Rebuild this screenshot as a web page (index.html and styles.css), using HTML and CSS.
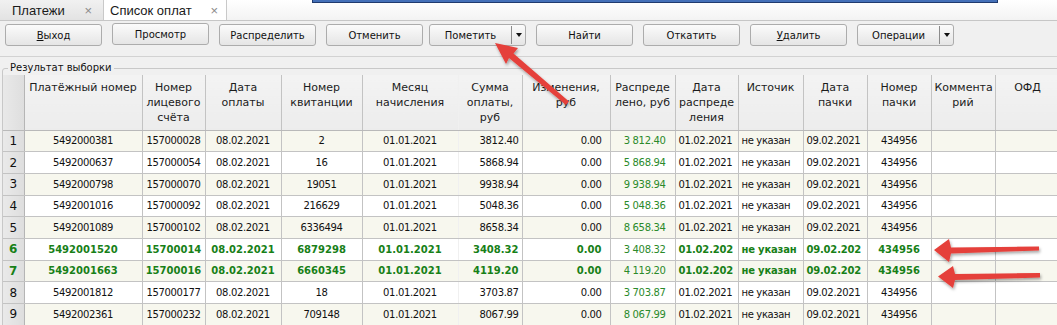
FILE: index.html
```html
<!DOCTYPE html>
<html lang="ru">
<head>
    <meta charset="UTF-8">
    <meta name="viewport" content="width=device-width, initial-scale=1.0">
    <title>Список оплат</title>
    <link rel="stylesheet" href="styles.css">
</head>
<body>
<div class="tabbar">
    <div class="tab tab-pay">Платежи<span class="close">×</span></div>
    <div class="tab tab-list">Список оплат<span class="close">×</span></div>
    <div class="winbar"></div>
</div>
<div class="toolbar">
    <button class="btn"><u>В</u>ыход</button>
    <button class="btn btn-up">Просмотр</button>
    <button class="btn">Распределить</button>
    <button class="btn">Отменить</button>
    <div class="split split-mark"><span class="label">Пометить</span><span class="drop"><i></i></span></div>
    <button class="btn">Найти</button>
    <button class="btn">Откатить</button>
    <button class="btn"><u>У</u>далить</button>
    <div class="split"><span class="label">Операции</span><span class="drop"><i></i></span></div>
</div>
<fieldset class="group">
    <legend>Результат выборки</legend>
    <table class="grid">
        <colgroup>
            <col style="width:21px"><col style="width:118px"><col style="width:63px"><col style="width:76px">
            <col style="width:81px"><col style="width:96px"><col style="width:64px"><col style="width:88px">
            <col style="width:65px"><col style="width:63px"><col style="width:65px"><col style="width:64px">
            <col style="width:64px"><col style="width:64px"><col style="width:65px">
        </colgroup>
        <thead>
            <tr>
                <th class="num"></th>
                <th>Платёжный номер</th>
                <th>Номер<br>лицевого<br>счёта</th>
                <th>Дата<br>оплаты</th>
                <th>Номер<br>квитанции</th>
                <th class="nosep">Месяц<br>начисления</th>
                <th>Сумма<br>оплаты,<br>руб</th>
                <th>Изменения,<br>руб</th>
                <th>Распреде<br>лено, руб</th>
                <th>Дата<br>распреде<br>ления</th>
                <th>Источик</th>
                <th>Дата<br>пачки</th>
                <th>Номер<br>пачки</th>
                <th>Коммента<br>рий</th>
                <th>ОФД</th>
            </tr>
        </thead>
        <tbody>
            <tr>
                <td class="num">1</td><td class="c">5492000381</td><td class="c">157000028</td><td class="c">08.02.2021</td><td class="c">2</td>
                <td class="c nosep">01.01.2021</td><td class="r">3812.40</td><td class="r wide">0.00</td><td class="r dist">3 812.40</td>
                <td class="l">01.02.2021</td><td class="l">не указан</td><td class="l">09.02.2021</td><td class="c">434956</td><td></td><td></td>
            </tr>
            <tr>
                <td class="num">2</td><td class="c">5492000637</td><td class="c">157000054</td><td class="c">08.02.2021</td><td class="c">16</td>
                <td class="c nosep">01.01.2021</td><td class="r">5868.94</td><td class="r wide">0.00</td><td class="r dist">5 868.94</td>
                <td class="l">01.02.2021</td><td class="l">не указан</td><td class="l">09.02.2021</td><td class="c">434956</td><td></td><td></td>
            </tr>
            <tr>
                <td class="num">3</td><td class="c">5492000798</td><td class="c">157000070</td><td class="c">08.02.2021</td><td class="c">19051</td>
                <td class="c nosep">01.01.2021</td><td class="r">9938.94</td><td class="r wide">0.00</td><td class="r dist">9 938.94</td>
                <td class="l">01.02.2021</td><td class="l">не указан</td><td class="l">09.02.2021</td><td class="c">434956</td><td></td><td></td>
            </tr>
            <tr>
                <td class="num">4</td><td class="c">5492001016</td><td class="c">157000092</td><td class="c">08.02.2021</td><td class="c">216629</td>
                <td class="c nosep">01.01.2021</td><td class="r">5048.36</td><td class="r wide">0.00</td><td class="r dist">5 048.36</td>
                <td class="l">01.02.2021</td><td class="l">не указан</td><td class="l">09.02.2021</td><td class="c">434956</td><td></td><td></td>
            </tr>
            <tr>
                <td class="num">5</td><td class="c">5492001089</td><td class="c">157000102</td><td class="c">08.02.2021</td><td class="c">6336494</td>
                <td class="c nosep">01.01.2021</td><td class="r">8658.34</td><td class="r wide">0.00</td><td class="r dist">8 658.34</td>
                <td class="l">01.02.2021</td><td class="l">не указан</td><td class="l">09.02.2021</td><td class="c">434956</td><td></td><td></td>
            </tr>
            <tr class="marked">
                <td class="num">6</td><td class="c">5492001520</td><td class="c">15700014</td><td class="c">08.02.2021</td><td class="c">6879298</td>
                <td class="c nosep">01.01.2021</td><td class="r">3408.32</td><td class="r wide">0.00</td><td class="r dist">3 408.32</td>
                <td class="l">01.02.202</td><td class="l">не указан</td><td class="l">09.02.202</td><td class="c">434956</td><td></td><td></td>
            </tr>
            <tr class="marked">
                <td class="num">7</td><td class="c">5492001663</td><td class="c">15700016</td><td class="c">08.02.2021</td><td class="c">6660345</td>
                <td class="c nosep">01.01.2021</td><td class="r">4119.20</td><td class="r wide">0.00</td><td class="r dist">4 119.20</td>
                <td class="l">01.02.202</td><td class="l">не указан</td><td class="l">09.02.202</td><td class="c">434956</td><td></td><td></td>
            </tr>
            <tr>
                <td class="num">8</td><td class="c">5492001812</td><td class="c">157000177</td><td class="c">08.02.2021</td><td class="c">18</td>
                <td class="c nosep">01.01.2021</td><td class="r">3703.87</td><td class="r wide">0.00</td><td class="r dist">3 703.87</td>
                <td class="l">01.02.2021</td><td class="l">не указан</td><td class="l">09.02.2021</td><td class="c">434956</td><td></td><td></td>
            </tr>
            <tr>
                <td class="num">9</td><td class="c">5492002361</td><td class="c">157000232</td><td class="c">08.02.2021</td><td class="c">709148</td>
                <td class="c nosep">01.01.2021</td><td class="r">8067.99</td><td class="r wide">0.00</td><td class="r dist">8 067.99</td>
                <td class="l">01.02.2021</td><td class="l">не указан</td><td class="l">09.02.2021</td><td class="c">434956</td><td></td><td></td>
            </tr>
        </tbody>
    </table>
</fieldset>

<!-- annotation arrows drawn over the screenshot -->
<svg class="marks" width="1057" height="325" viewBox="0 0 1057 325">
    <defs>
        <filter id="shade" x="-20%" y="-40%" width="140%" height="180%">
            <feDropShadow dx="1" dy="2" stdDeviation="1.5" flood-color="#000" flood-opacity="0.35"/>
        </filter>
    </defs>
    <g fill="#e5403a" filter="url(#shade)">
        <polygon points="495,43 518,48 513.5,53.5 569,101.5 566,105 509,58 506,64"/>
        <polygon points="934,250 949,239 951,247.5 1039,246.5 1039,250.5 951,253.5 949,262"/>
        <polygon points="938,276.5 953,266 955,274 1040,273 1040,277.5 955,280 953,288"/>
    </g>
</svg>
</body>
</html>
```

FILE: styles.css
```css
body {
    margin: 0;
    background-color: #f0f0f0;
    font-family: "DejaVu Sans", Tahoma, sans-serif;
    font-size: 10px;
    color: #111;
    height: 325px;
    overflow: hidden;
    position: relative;
}

/* Tabs */
.tabbar {
    display: flex;
    height: 20px;
    background: linear-gradient(#ffffff, #f3f3f3);
    border-bottom: 1px solid #c6c6c6;
    position: relative;
}

.tab {
    display: flex;
    align-items: center;
    box-sizing: border-box;
    font-family: "Liberation Sans", Arial, sans-serif;
    font-size: 13px;
    color: #1a1a1a;
    border-right: 1px solid #c9c9c9;
}

.tab .close {
    margin-left: auto;
    color: #8a8a8a;
    font-size: 13px;
}

.tab-pay {
    width: 104px;
    padding: 0 11px 0 12px;
    background: linear-gradient(#f1f1f1, #e3e3e3);
}

.tab-list {
    width: 123px;
    padding: 0 8px 0 6px;
    background-color: #ffffff;
}

.winbar {
    position: absolute;
    top: 0;
    left: 312px;
    width: 684px;
    height: 2px;
    background-color: #4470b8;
    border: 1px solid #1f3a6e;
    border-top: none;
}

/* Toolbar */
.toolbar {
    display: flex;
    gap: 10px;
    padding: 3px 5px 0;
    height: 32px;
    border-bottom: 1px solid #d2d2d2;
}

.btn,
.split {
    box-sizing: border-box;
    width: 97px;
    height: 22px;
    border: 1px solid #acacac;
    border-radius: 3px;
    background: linear-gradient(#fbfbfb, #e5e5e5);
    font-family: "DejaVu Sans", Tahoma, sans-serif;
    font-size: 10px;
    color: #111;
    padding: 0;
}

.btn u {
    text-decoration-thickness: 1px;
    text-underline-offset: 1px;
}

.btn-up {
    margin-top: -1px;
}

.split {
    display: flex;
    align-items: center;
}

.split-mark {
    margin-left: -4px;
}

.split .label {
    flex: 1;
    text-align: center;
}

.split .drop {
    width: 13px;
    height: 18px;
    border-left: 1px solid #8c8c8c;
    display: flex;
    align-items: center;
    justify-content: center;
}

.split .drop i {
    border-left: 3.5px solid transparent;
    border-right: 3.5px solid transparent;
    border-top: 4px solid #111;
}

/* Result group */
.group {
    margin: 4px 0 0 2px;
    padding: 0;
    border: 1px solid #c8c8c8;
    border-radius: 3px 0 0 0;
}

.group legend {
    margin-left: 5px;
    padding: 0 2px;
    font-size: 10px;
    line-height: 14px;
    color: #111;
}

.grid {
    table-layout: fixed;
    width: 1057px;
    border-collapse: collapse;
}

.grid th,
.grid td {
    overflow: hidden;
    white-space: nowrap;
    padding: 0 3px;
    border-right: 1px solid #c3c3c3;
    border-bottom: 1px solid #c3c3c3;
}

.grid thead tr {
    height: 55px;
}

.grid th {
    vertical-align: top;
    padding-top: 5px;
    font-size: 11px;
    font-weight: normal;
    line-height: 15px;
    color: #1c1c1c;
    text-align: center;
    background: linear-gradient(#f3f3f3, #ececec);
    border-bottom-color: #b9b9b9;
}

.grid tbody tr {
    height: 21.7px;
}

.grid td {
    letter-spacing: -0.35px;
    background-color: #ffffff;
}

.grid tbody tr:nth-child(odd) td {
    background-color: #f7f7ee;
}

.grid .nosep {
    border-right-color: transparent;
}

.grid .num,
.grid tbody tr:nth-child(odd) td.num {
    padding: 0;
    text-align: center;
    font-size: 12px;
    letter-spacing: 0;
    background: linear-gradient(to right, #e9e9e9, #dedede);
    border-right-color: #b5b5b5;
}

.c { text-align: center; }
.r { text-align: right; }
.l { text-align: left; }

.grid td.wide { padding-right: 8px; }

.grid td.dist {
    padding-right: 9px;
    color: #2a8a2a;
}

.grid tr.marked td {
    font-weight: bold;
    letter-spacing: 0;
    color: #178017;
}

.grid tr.marked td.l {
    letter-spacing: -0.2px;
}

.grid tr.marked td.dist {
    font-weight: normal;
    letter-spacing: -0.35px;
    color: #2a8a2a;
}

/* Annotation arrows */
.marks {
    position: absolute;
    top: 0;
    left: 0;
    pointer-events: none;
}
```
